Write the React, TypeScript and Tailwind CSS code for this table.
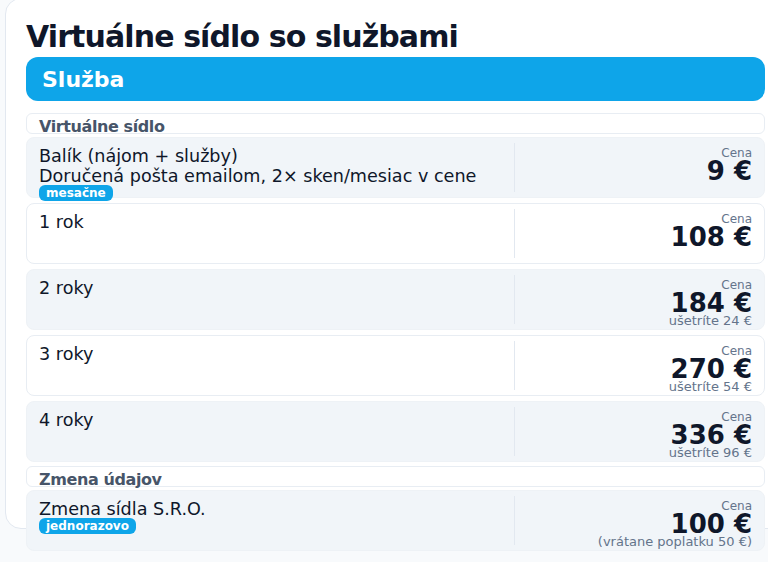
import React from "react";

interface Row {
  lines: string[];
  badge?: string;
  price: string;
  note?: string;
  gray?: boolean;
}

interface Section {
  title: string;
  rows: Row[];
}

const sections: Section[] = [
  {
    title: "Virtuálne sídlo",
    rows: [
      {
        lines: ["Balík (nájom + služby)", "Doručená pošta emailom, 2× sken/mesiac v cene"],
        badge: "mesačne",
        price: "9 €",
        gray: true,
      },
      { lines: ["1 rok"], price: "108 €" },
      { lines: ["2 roky"], price: "184 €", note: "ušetríte 24 €", gray: true },
      { lines: ["3 roky"], price: "270 €", note: "ušetríte 54 €" },
      { lines: ["4 roky"], price: "336 €", note: "ušetríte 96 €", gray: true },
    ],
  },
  {
    title: "Zmena údajov",
    rows: [
      {
        lines: ["Zmena sídla S.R.O."],
        badge: "jednorazovo",
        price: "100 €",
        note: "(vrátane poplatku 50 €)",
        gray: true,
      },
    ],
  },
];

const PriceRow = ({ lines, badge, price, note, gray }: Row) => {
  return (
    <div
      className={`flex h-[61px] shrink-0 rounded-lg border ${
        gray ? "border-[#eef2f6] bg-[#f1f5f9]" : "border-[#e8edf3] bg-white"
      }`}
    >
      <div className="flex-1 pl-3 pt-2 text-[1.1rem] leading-5 text-[#0f172a]">
        {lines.map((l) => (
          <div key={l}>{l}</div>
        ))}
        {badge && (
          <span className="-mt-px block w-fit rounded-md bg-[#0ea5e9] px-[7px] text-xs font-bold leading-4 text-white">
            {badge}
          </span>
        )}
      </div>
      <div className="my-[5px] w-px bg-[#e2e8f0]"></div>
      <div className="w-[249px] pr-3 pt-2 text-right">
        <div className="text-xs leading-[14px] text-[#64748b]">Cena</div>
        <div className="text-[26px] font-bold leading-[22px] text-[#0f172a]">{price}</div>
        {note && <div className="text-[13px] leading-[14px] text-[#64748b]">{note}</div>}
      </div>
    </div>
  );
};

const App = () => {
  return (
    <div className="h-[562px] overflow-hidden bg-[#f8fafc] font-['DejaVu_Sans',sans-serif]">
      <div className="ml-[5px] mt-[-2px] h-[531px] w-[781px] rounded-2xl border border-[#e2e8f0] bg-white px-5 pt-5">
        <h1 className="text-3xl font-bold leading-9 tracking-[-0.03em] text-[#0f172a]">
          Virtuálne sídlo so službami
        </h1>
        <div className="mt-0.5 flex h-11 items-center rounded-xl bg-[#0ea5e9] px-4 text-[22px] font-bold text-white">
          Služba
        </div>
        <div className="mt-3 flex flex-col">
          {sections.map((s, i) => (
            <div key={s.title} className={`flex flex-col ${i > 0 ? "mt-1" : ""}`}>
              <div className="h-[21px] rounded-md border border-[#e8edf3] bg-white px-3 pt-[3px] text-base font-bold leading-5 tracking-tight text-[#475569]">
                {s.title}
              </div>
              <div className="mt-[3px] flex flex-col gap-[5px]">
                {s.rows.map((r) => (
                  <PriceRow key={r.price} {...r} />
                ))}
              </div>
            </div>
          ))}
        </div>
      </div>
    </div>
  );
};

export default App;
